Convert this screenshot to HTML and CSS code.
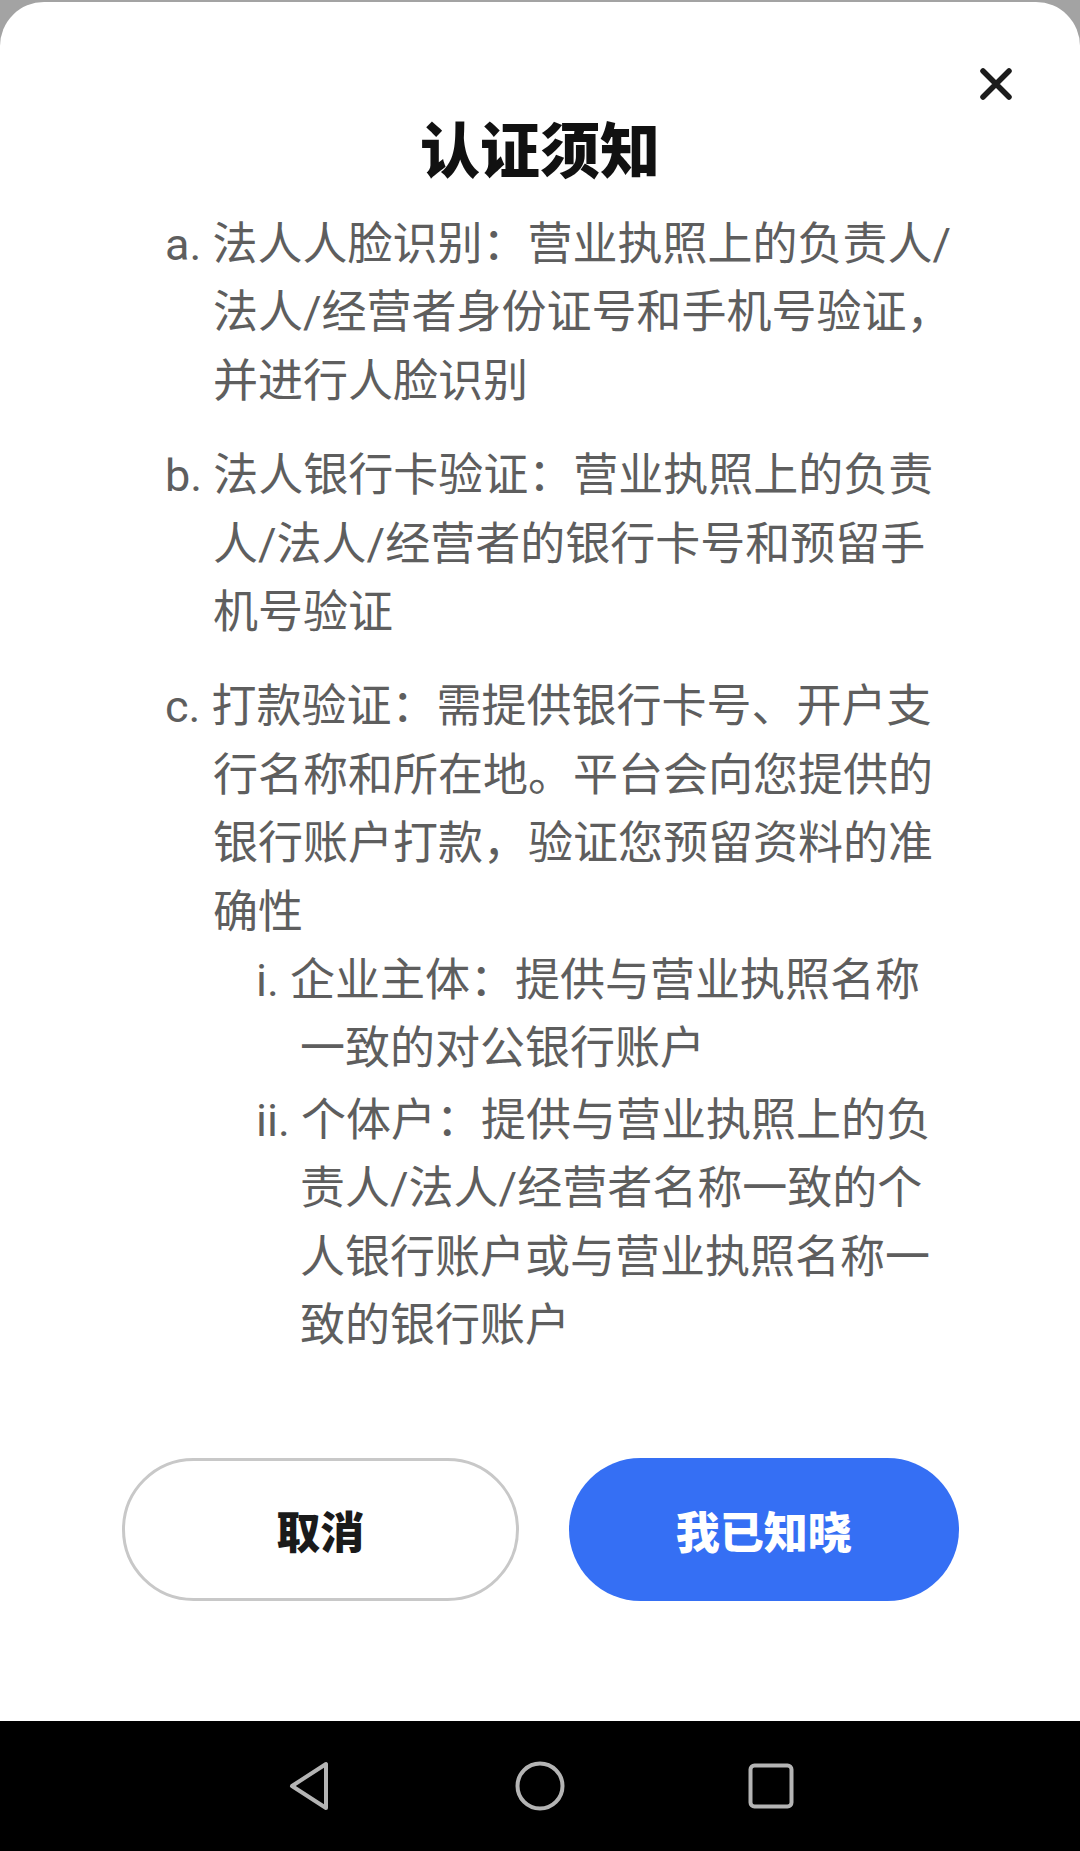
FILE: index.html
```html
<!DOCTYPE html>
<html lang="zh-CN">
<head>
<meta charset="utf-8">
<title>认证须知</title>
<link rel="stylesheet" href="styles.css">
</head>
<body>
<div class="screen">
  <section class="sheet">
    <button class="close" aria-label="关闭">
      <svg viewBox="0 0 40 40" width="40" height="40"><path d="M7 7 L33 33 M33 7 L7 33" fill="none" stroke="#1c1c1c" stroke-width="5.5" stroke-linecap="round"/></svg>
    </button>
    <h1 class="title">认证须知</h1>
    <div class="notice">
      <p class="item">a. 法人人脸识别：营业执照上的负责人/法人/经营者身份证号和手机号验证，并进行人脸识别</p>
      <p class="item">b. 法人银行卡验证：营业执照上的负责人/法人/经营者的银行卡号和预留手机号验证</p>
      <div class="item">c. 打款验证：需提供银行卡号、开户支行名称和所在地。平台会向您提供的银行账户打款，验证您预留资料的准确性
        <div class="sub">
          <p class="sub-item">i. 企业主体：提供与营业执照名称一致的对公银行账户</p>
          <p class="sub-item">ii. 个体户：提供与营业执照上的负责人/法人/经营者名称一致的个人银行账户或与营业执照名称一致的银行账户</p>
        </div>
      </div>
    </div>
    <div class="actions">
      <button class="btn btn-cancel">取消</button>
      <button class="btn btn-ok">我已知晓</button>
    </div>
  </section>
  <nav class="navbar">
    <span class="nav-slot">
      <svg viewBox="0 0 46 52" width="46" height="52"><path d="M40 4 V48 L6 26 Z" fill="none" stroke="#b4b4b4" stroke-width="4" stroke-linejoin="round"/></svg>
    </span>
    <span class="nav-slot">
      <svg viewBox="0 0 52 52" width="52" height="52"><circle cx="26" cy="26" r="22.5" fill="none" stroke="#b4b4b4" stroke-width="4"/></svg>
    </span>
    <span class="nav-slot">
      <svg viewBox="0 0 48 48" width="48" height="48"><rect x="3.5" y="3.5" width="41" height="41" rx="4" fill="none" stroke="#b4b4b4" stroke-width="4"/></svg>
    </span>
  </nav>
</div>
</body>
</html>
```
FILE: styles.css
```css
* { box-sizing: border-box; }
html, body { margin: 0; padding: 0; }
body {
  background: #a3a3a3;
  font-family: Roboto, "Noto Sans CJK SC", sans-serif;
  width: 1080px;
  height: 1851px;
  overflow: hidden;
}
.screen {
  display: flex;
  flex-direction: column;
  height: 1851px;
}
.sheet {
  position: relative;
  margin-top: 2px;
  height: 1719px;
  background: #ffffff;
  border-radius: 44px 44px 0 0;
  display: flex;
  flex-direction: column;
  padding-top: 111px;
  padding-bottom: 120px;
}
.close {
  position: absolute;
  top: 62px;
  right: 64px;
  width: 40px;
  height: 40px;
  padding: 0;
  border: 0;
  background: none;
  display: flex;
}
.title {
  margin: 0;
  text-align: center;
  font-size: 60px;
  line-height: 80px;
  font-weight: 900;
  color: #111111;
}
.notice {
  margin-top: 18px;
  padding: 0 122px 0 165px;
  color: #5e5e5e;
  font-size: 45px;
  line-height: 68.4px;
}
.item {
  margin: 0 0 26px 0;
  padding-left: 48px;
  text-indent: -48px;
}
.item:last-child { margin-bottom: 0; }
.sub {
  margin-left: 43px;
  text-indent: 0;
}
.sub-item {
  margin: 0 0 3px 0;
  padding-left: 44px;
  text-indent: -44px;
}
.actions {
  margin-top: auto;
  display: flex;
  gap: 50px;
  padding: 0 121px 0 122px;
}
.btn {
  flex: 1;
  height: 143px;
  border-radius: 72px;
  font-family: Roboto, "Noto Sans CJK SC", sans-serif;
  font-size: 44px;
  font-weight: 900;
  padding: 0;
  cursor: pointer;
}
.btn-cancel {
  background: #ffffff;
  border: 3px solid #c8c8c8;
  color: #1a1a1a;
}
.btn-ok {
  background: #356ff4;
  border: 0;
  color: #ffffff;
}
.navbar {
  height: 130px;
  background: #000000;
  display: flex;
  align-items: center;
  justify-content: center;
  gap: 171px;
}
.nav-slot {
  width: 60px;
  height: 60px;
  display: flex;
  align-items: center;
  justify-content: center;
}
```
